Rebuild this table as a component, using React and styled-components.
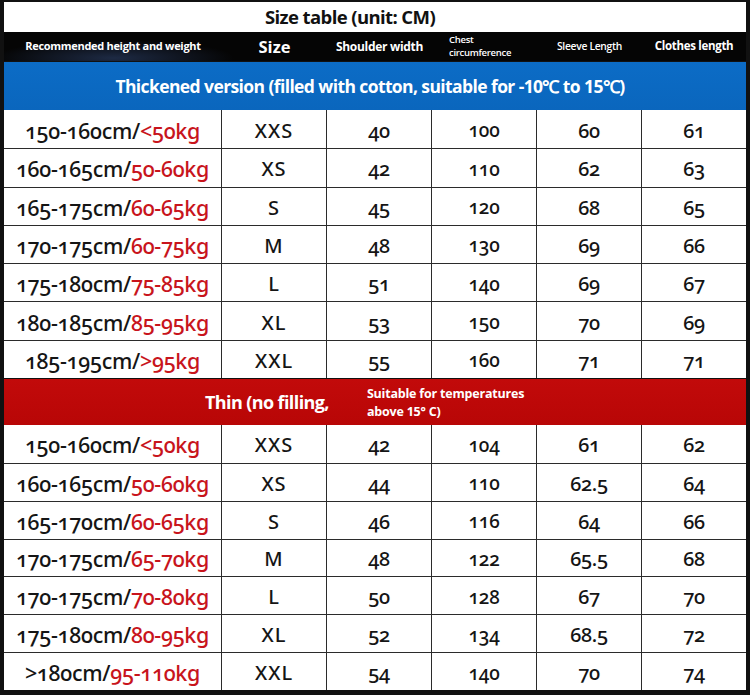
import React from 'react';
import styled, { createGlobalStyle } from 'styled-components';

const GlobalStyle = createGlobalStyle`
  html, body {
    margin: 0;
    padding: 0;
    background: #fff;
  }
`;

const COLUMNS = '218px 105px 105px 105px 105px 1fr';
const LINE = '#2b2b2b';

const thick = [
  ['150-160cm/', '<50kg', 'XXS', '40', '100', '60', '61'],
  ['160-165cm/', '50-60kg', 'XS', '42', '110', '62', '63'],
  ['165-175cm/', '60-65kg', 'S', '45', '120', '68', '65'],
  ['170-175cm/', '60-75kg', 'M', '48', '130', '69', '66'],
  ['175-180cm/', '75-85kg', 'L', '51', '140', '69', '67'],
  ['180-185cm/', '85-95kg', 'XL', '53', '150', '70', '69'],
  ['185-195cm/', '>95kg', 'XXL', '55', '160', '71', '71'],
];

const thin = [
  ['150-160cm/', '<50kg', 'XXS', '42', '104', '61', '62'],
  ['160-165cm/', '50-60kg', 'XS', '44', '110', '62.5', '64'],
  ['165-170cm/', '60-65kg', 'S', '46', '116', '64', '66'],
  ['170-175cm/', '65-70kg', 'M', '48', '122', '65.5', '68'],
  ['170-175cm/', '70-80kg', 'L', '50', '128', '67', '70'],
  ['175-180cm/', '80-95kg', 'XL', '52', '134', '68.5', '72'],
  ['>180cm/', '95-110kg', 'XXL', '54', '140', '70', '74'],
];

const Frame = styled.div`
  width: 750px;
  height: 695px;
  box-sizing: border-box;
  background: #111;
  padding: 2px 4px 5px 4px;
  display: flex;
  flex-direction: column;
`;

const Title = styled.div`
  height: 30px;
  background: #fff;
  display: flex;
  align-items: center;
  justify-content: center;
  padding-right: 50px;
  font-family: 'Open Sans', sans-serif;
  font-weight: 700;
  font-size: 18.5px;
  letter-spacing: -0.6px;
  color: #111;
`;

const HeaderRow = styled.div`
  height: 29px;
  display: grid;
  grid-template-columns: ${COLUMNS};
  background: radial-gradient(ellipse 120px 18px at 110px 26px, #1d2a44 0%, transparent 100%), #050505;
  color: #fff;
  font-family: 'Open Sans', sans-serif;
  font-weight: 700;
`;

const HeadCell = styled.div`
  display: flex;
  flex-direction: column;
  align-items: ${({ left }) => (left ? 'flex-start' : 'center')};
  justify-content: center;
  padding-left: ${({ left }) => (left ? '17px' : '0')};
  font-size: ${({ size }) => size || 10}px;
  line-height: ${({ left }) => (left ? '13px' : '1.3')};
  letter-spacing: ${({ size }) => (size > 12 ? '0' : '-0.3px')};
  font-weight: ${({ light }) => (light ? 600 : 700)};
  white-space: nowrap;
`;

const Band = styled.div`
  height: ${({ h }) => h}px;
  display: flex;
  align-items: center;
  justify-content: ${({ start }) => (start ? 'flex-start' : 'center')};
  padding-left: ${({ start }) => (start ? '201px' : '0')};
  padding-right: ${({ start }) => (start ? '0' : '10px')};
  gap: 38px;
  color: #fff;
  font-family: 'Open Sans', sans-serif;
  font-weight: 700;
  font-size: ${({ start }) => (start ? 18 : 17.5)}px;
  letter-spacing: -0.6px;
  background: ${({ tone }) =>
    tone === 'blue'
      ? 'linear-gradient(180deg, #0c6cc6 0%, #0a66bd 100%)'
      : 'linear-gradient(180deg, #c20a0a 0%, #b80606 100%)'};
  border-top: 1px solid #111;
  box-sizing: border-box;
`;

const BandNote = styled.div`
  display: flex;
  flex-direction: column;
  font-size: 12.5px;
  line-height: 17.5px;
  letter-spacing: -0.2px;
  margin-top: 2px;
`;

const Row = styled.div`
  height: ${({ h }) => h}px;
  box-sizing: border-box;
  display: grid;
  grid-template-columns: ${COLUMNS};
  background: #fff;
  border-top: ${({ first }) => (first ? 'none' : `1.5px solid ${LINE}`)};
`;

const Cell = styled.div`
  display: flex;
  align-items: center;
  justify-content: center;
  border-right: ${({ last }) => (last ? 'none' : `1.5px solid ${LINE}`)};
  font-family: 'Noto Sans', 'Open Sans', sans-serif;
  font-variant-numeric: oldstyle-nums;
  font-weight: 500;
  font-size: ${({ size }) => size || 20}px;
  letter-spacing: ${({ wide }) => (wide ? '1px' : '-0.3px')};
  color: #151515;
  padding-top: 2px;
  white-space: nowrap;
`;

const Red = styled.span`
  color: #c8141c;
`;

const Section = ({ rows, h }) =>
  rows.map((r, i) => (
    <Row key={i} h={h} first={i === 0}>
      <Cell size={21.5}>
        {r[0]}
        <Red>{r[1]}</Red>
      </Cell>
      <Cell size={20} wide>
        {r[2]}
      </Cell>
      <Cell>{r[3]}</Cell>
      <Cell size={19}>{r[4]}</Cell>
      <Cell>{r[5]}</Cell>
      <Cell last>{r[6]}</Cell>
    </Row>
  ));

export default function App() {
  return (
    <>
      <GlobalStyle />
      <Frame>
        <Title>Size table (unit: CM)</Title>
        <HeaderRow>
          <HeadCell size={11}>Recommended height and weight</HeadCell>
          <HeadCell size={16.5}>Size</HeadCell>
          <HeadCell size={12}>Shoulder width</HeadCell>
          <HeadCell size={9.5} left light>
            <span>Chest</span>
            <span>circumference</span>
          </HeadCell>
          <HeadCell size={10.3} light>
            Sleeve Length
          </HeadCell>
          <HeadCell size={11.5}>Clothes length</HeadCell>
        </HeaderRow>
        <Band tone="blue" h={49}>
          Thickened version (filled with cotton, suitable for -10℃ to 15℃)
        </Band>
        <Section rows={thick} h={38.3} />
        <Band tone="red" h={47} start>
          <span>Thin (no filling,</span>
          <BandNote>
            <span>Suitable for temperatures</span>
            <span>above 15° C)</span>
          </BandNote>
        </Band>
        <Section rows={thin} h={37.9} />
      </Frame>
    </>
  );
}
